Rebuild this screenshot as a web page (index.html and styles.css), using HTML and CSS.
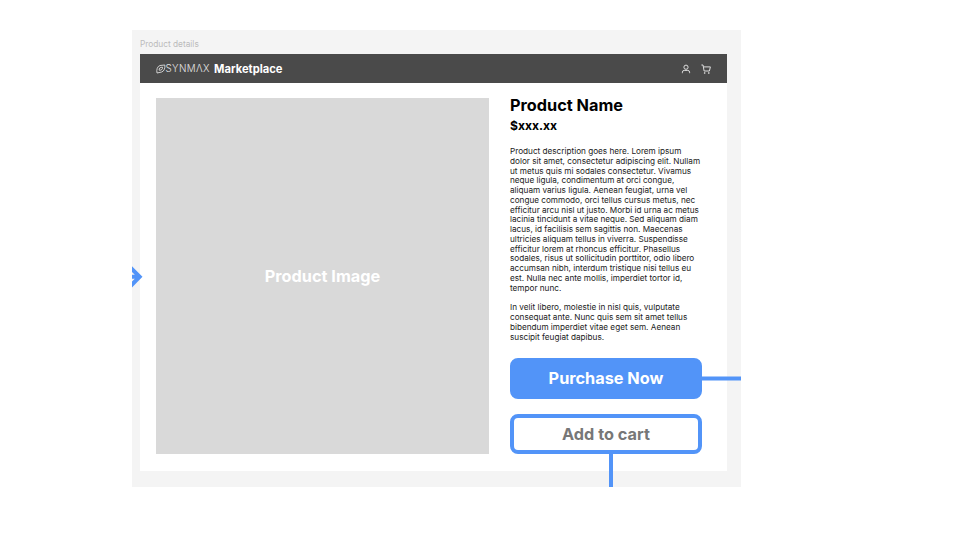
FILE: index.html
```html
<!DOCTYPE html>
<html lang="en">
<head>
<meta charset="utf-8">
<title>Product details</title>
<link rel="stylesheet" href="styles.css">
</head>
<body>
<main class="canvas">
  <div class="frame-label">Product details</div>
  <section class="frame">
    <header class="topbar">
      <div class="brand">
        <svg class="mark" viewBox="0 0 10 10"><path d="M1 9 C.2 5.8 1.4 2.2 4 1.5 L8.8 1 C9.3 4 8.2 7.2 5.7 8 Z"/><path d="M3.2 6.2 C2.7 4.4 4.3 3.1 6.5 3.2 C7 5 5.3 6.6 3.2 6.2"/></svg>
        <span class="synmax">SYNMΛX</span>
        <span class="market">Marketplace</span>
      </div>
      <div class="tools">
        <svg class="tool" viewBox="0 0 10 10"><circle cx="5" cy="3.2" r="2.1"/><path d="M1.4 9.2V8.2Q1.4 6.4 3.2 6.4H6.8Q8.6 6.4 8.6 8.2V9.2"/></svg>
        <svg class="tool" viewBox="0 0 10 10"><path d="M.4 1H2L3.1 7H8.4L9.4 2.9H2.4"/><circle cx="3.7" cy="9" r=".5"/><circle cx="7.8" cy="9" r=".5"/></svg>
      </div>
    </header>
    <div class="content">
      <div class="image">Product Image</div>
      <div class="info">
        <h1>Product Name</h1>
        <div class="price">$xxx.xx</div>
        <p>Product description goes here. Lorem ipsum<br>dolor sit amet, consectetur adipiscing elit. Nullam<br>ut metus quis mi sodales consectetur. Vivamus<br>neque ligula, condimentum at orci congue,<br>aliquam varius ligula. Aenean feugiat, urna vel<br>congue commodo, orci tellus cursus metus, nec<br>efficitur arcu nisl ut justo. Morbi id urna ac metus<br>lacinia tincidunt a vitae neque. Sed aliquam diam<br>lacus, id facilisis sem sagittis non. Maecenas<br>ultricies aliquam tellus in viverra. Suspendisse<br>efficitur lorem at rhoncus efficitur. Phasellus<br>sodales, risus ut sollicitudin porttitor, odio libero<br>accumsan nibh, interdum tristique nisi tellus eu<br>est. Nulla nec ante mollis, imperdiet tortor id,<br>tempor nunc.</p>
        <p>In velit libero, molestie in nisl quis, vulputate<br>consequat ante. Nunc quis sem sit amet tellus<br>bibendum imperdiet vitae eget sem. Aenean<br>suscipit feugiat dapibus.</p>
        <button class="button primary">Purchase Now</button>
        <button class="button secondary">Add to cart</button>
      </div>
    </div>
  </section>
  <svg class="connectors" viewBox="0 0 609 457">
    <path class="line" d="M569 348.5H609M479 423V457"/>
    <path class="arrow" d="M0 236.2L10.5 246.8L0 257.4V251.6L2.8 248.8H0V244.8H2.8L0 242Z"/>
  </svg>
</main>
</body>
</html>
```
FILE: styles.css
```css
* { box-sizing: border-box; }

body {
  margin: 0;
  padding: 30px 0 0 132px;
  background: #fff;
  font-family: Inter, "Liberation Sans", sans-serif;
}

.canvas {
  position: relative;
  width: 609px;
  height: 457px;
  padding: 0 14px 0 8px;
  background: #f4f4f4;
}

.frame-label {
  height: 24px;
  padding-top: 8px;
  color: #bbb;
  font-size: 8.3px;
  line-height: 12px;
}

.frame {
  height: 417px;
  background: #fff;
}

.topbar {
  display: flex;
  justify-content: space-between;
  align-items: center;
  height: 28.5px;
  padding: 0 16px 0 15.5px;
  background: #4a4a4a;
}

.brand {
  display: flex;
  align-items: center;
  padding-top: 1px;
  color: #fff;
  white-space: nowrap;
}

.mark {
  width: 10px;
  height: 10px;
  fill: none;
  stroke: #ddd;
  stroke-width: 0.9;
}

.synmax {
  width: 48.5px;
  color: #e4e4e4;
  font-size: 9.8px;
  font-weight: 300;
  letter-spacing: 0.4px;
}

.market {
  font-size: 11.2px;
  font-weight: 700;
}

.tools {
  display: flex;
  gap: 10px;
  padding-top: 2px;
}

.tool {
  width: 10px;
  height: 10px;
  fill: none;
  stroke: #ddd;
  stroke-width: 1;
}

.content {
  display: flex;
  gap: 21px;
  padding: 15.5px 0 0 16px;
}

.image {
  display: grid;
  place-items: center;
  width: 333px;
  height: 356px;
  background: #d9d9d9;
  color: #fff;
  font-size: 16.3px;
  font-weight: 700;
}

.info {
  width: 192px;
  white-space: nowrap;
}

h1 {
  margin: -3px 0 0;
  color: #000;
  font-size: 16.3px;
  font-weight: 700;
  line-height: 20px;
}

.price {
  margin: 3px 0 13px;
  font-size: 12.1px;
  font-weight: 700;
  line-height: 16px;
}

p {
  margin: 0 0 9.77px;
  color: #222;
  font-size: 8.18px;
  line-height: 9.77px;
}

.button {
  display: block;
  width: 192px;
  height: 41px;
  margin: 0;
  padding: 0;
  border: 4px solid #5294f8;
  border-radius: 8px;
  font-family: inherit;
  font-size: 16.3px;
  font-weight: 700;
}

.primary {
  margin-top: 15.3px;
  background: #5294f8;
  color: #fff;
}

.secondary {
  height: 40px;
  margin-top: 15px;
  background: #fff;
  color: #777;
}

.connectors {
  position: absolute;
  left: 0;
  top: 0;
  width: 609px;
  height: 457px;
}

.line {
  stroke: #5294f8;
  stroke-width: 4;
}

.arrow {
  fill: #5294f8;
}
```
